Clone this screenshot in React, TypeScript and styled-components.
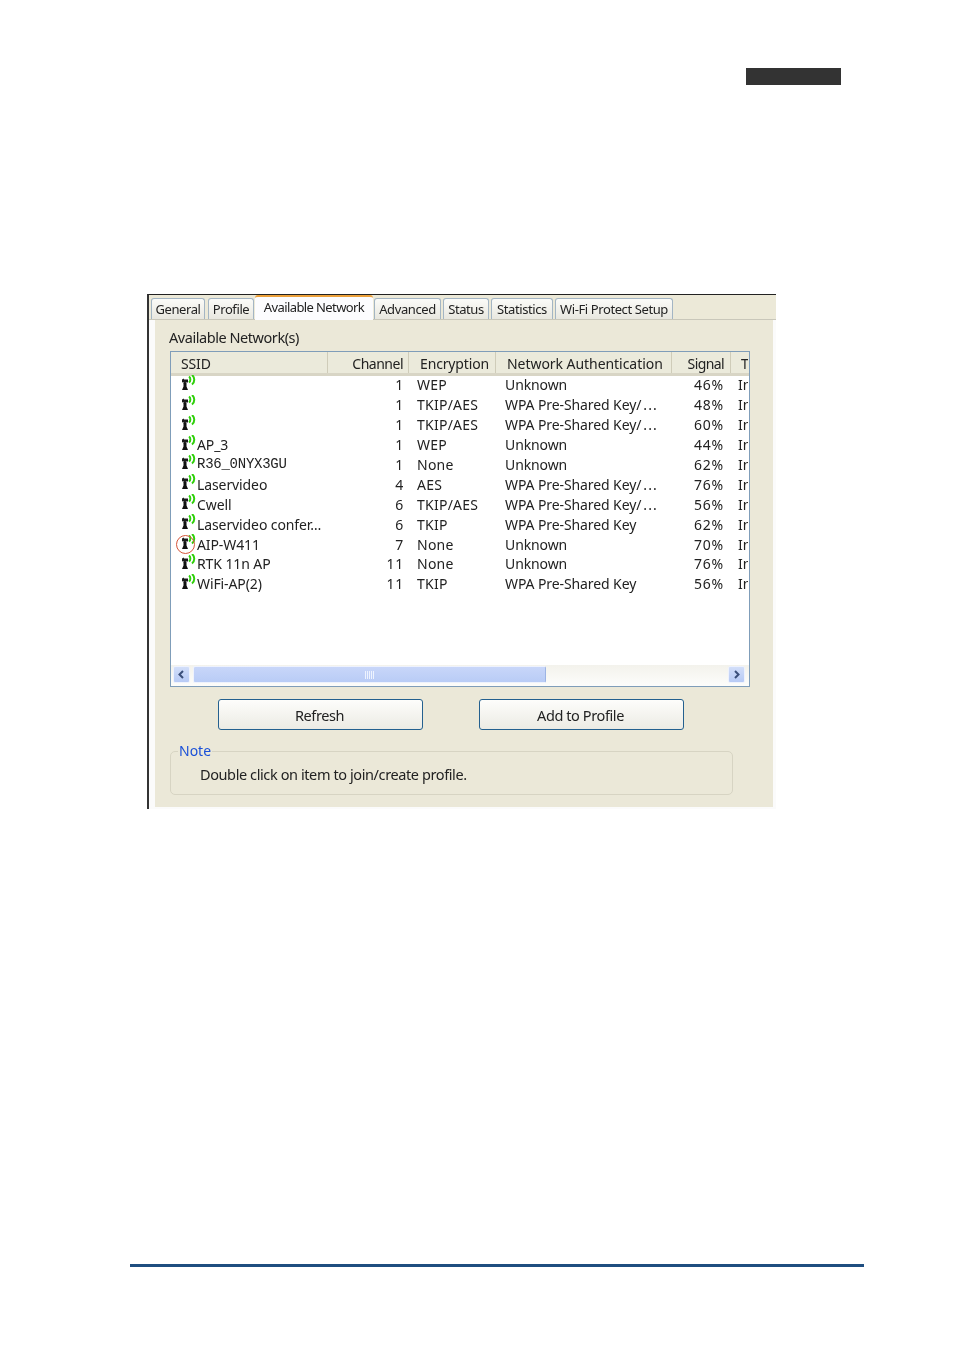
import React from "react";
import styled, { createGlobalStyle } from "styled-components";

const Global = createGlobalStyle`
  html, body { margin: 0; padding: 0; background: #fff; }
  * { box-sizing: border-box; }
`;

const Page = styled.div`
  width: 955px;
  height: 1350px;
  display: flex;
  flex-direction: column;
  background: #fff;
  overflow: hidden;
  font-family: "Noto Sans", "Liberation Sans", sans-serif;
  color: #222;
  font-size: 14px;
`;
const HeaderBar = styled.div`
  width: 95px;
  height: 17px;
  margin: 68px 0 0 746px;
  background: #333333;
`;
const Dialog = styled.div`
  width: 629px;
  height: 515px;
  margin: 209px 0 0 147px;
  border-top: 1px solid #222;
  border-left: 2px solid #333;
  display: flex;
  flex-direction: column;
  background: #fbfbfb;
  filter: blur(0.45px);
`;
const TabStrip = styled.div`
  height: 25px;
  flex: none;
  display: flex;
  align-items: flex-end;
  padding-left: 2px;
  background: #ece9d8;
  border-bottom: 1px solid #c9c7ba;
`;
const Tab = styled.div<{ $w: number; $ml: number; $active?: boolean }>`
  width: ${(p) => p.$w}px;
  margin-left: ${(p) => p.$ml}px;
  height: ${(p) => (p.$active ? 25 : 21)}px;
  margin-bottom: ${(p) => (p.$active ? -1 : 0)}px;
  display: flex;
  align-items: center;
  justify-content: center;
  font-size: 13px;
  letter-spacing: ${(p) => (p.$active ? -0.6 : -0.4)}px;
  white-space: nowrap;
  border-radius: 3px 3px 0 0;
  border: 1px solid #a3b5c4;
  border-bottom: 0;
  background: ${(p) => (p.$active ? "#fcfcfe" : "linear-gradient(#fbfbf8, #e8e7df)")};
  ${(p) => p.$active && "border: 0; border-top: 2px solid #eda13a; position: relative; padding-bottom: 4px;"}
`;
const Panel = styled.div`
  flex: 1;
  margin: 0 3px 2px 6px;
  background: #ebe8d8;
  padding: 8px 0 0 14px;
  display: flex;
  flex-direction: column;
`;
const SectionTitle = styled.div`
  height: 23px;
  line-height: 18px;
  font-size: 14.5px;
  letter-spacing: -0.45px;
`;
const ListBox = styled.div`
  width: 580px;
  height: 336px;
  margin: 0 0 0 1px;
  border: 1px solid #7f9db9;
  background: #fff;
  display: flex;
  flex-direction: column;
`;
const HeaderRow = styled.div`
  height: 24px;
  flex: none;
  display: grid;
  grid-template-columns: 157px 81px 87px 176px 59px 17px;
  background: #ebeadb;
  border-bottom: 3px solid #d8d5c5;
  font-size: 14px;
  overflow: hidden;
`;
const HeadCell = styled.div<{ $right?: boolean; $pad: number; $ls: number }>`
  line-height: 24px;
  white-space: nowrap;
  overflow: hidden;
  letter-spacing: ${(p) => p.$ls}px;
  text-align: ${(p) => (p.$right ? "right" : "left")};
  padding: ${(p) => (p.$right ? `0 ${p.$pad}px 0 0` : `0 0 0 ${p.$pad}px`)};
  border-right: 1px solid #cfccb9;
  &:last-child { border-right: 0; }
`;
const Rows = styled.div`
  flex: 1;
  display: flex;
  flex-direction: column;
  margin-top: -0.6px;
`;
const Row = styled.div`
  height: 19.9px;
  flex: none;
  display: grid;
  grid-template-columns: 157px 81px 87px 176px 59px 17px;
  align-items: center;
  padding-bottom: 3px;
  font-size: 14px;
  letter-spacing: -0.1px;
  white-space: nowrap;
`;
const SsidCell = styled.div`
  display: flex;
  align-items: center;
  padding-left: 10px;
  position: relative;
  height: 100%;
`;
const SsidText = styled.span<{ $mono?: boolean }>`
  margin-left: 1px;
  ${(p) => p.$mono && `font-family: "Liberation Mono", monospace; font-size: 14px; letter-spacing: -0.25px;`}
`;
const Ring = styled.span`
  position: absolute;
  left: 5px;
  top: 0px;
  width: 19px;
  height: 19px;
  border: 1px solid #d6553a;
  border-radius: 50%;
`;
const NumCell = styled.div<{ $pad: number }>`
  text-align: right;
  letter-spacing: 0.8px;
  padding-right: ${(p) => p.$pad}px;
`;
const TextCell = styled.div<{ $pad: number; $ls?: number }>`
  padding-left: ${(p) => p.$pad}px;
  letter-spacing: ${(p) => p.$ls ?? -0.1}px;
  overflow: hidden;
`;
const Dots = styled.span`
  letter-spacing: 1.1px;
  margin-left: 2px;
`;
const ScrollBar = styled.div`
  height: 21px;
  flex: none;
  display: flex;
  align-items: center;
  padding: 0 3px 2px 2px;
  background: linear-gradient(#f3f2ec, #fdfdfb);
`;
const ScrollButton = styled.div`
  width: 17px;
  height: 17px;
  flex: none;
  border-radius: 2px;
  border: 1px solid #eef2fd;
  background: linear-gradient(#d2def9, #b7caf5);
  display: flex;
  align-items: center;
  justify-content: center;
`;
const Thumb = styled.div`
  width: 353px;
  height: 17px;
  margin: 0 182px 0 3px;
  border-radius: 2px;
  border: 1px solid #eef2fd;
  border-right-color: #9db4e4;
  background: linear-gradient(#c8d6f9, #b9ccf6);
  display: flex;
  align-items: center;
  justify-content: center;
`;
const Buttons = styled.div`
  display: flex;
  gap: 56px;
  margin: 12px 0 0 49px;
`;
const Button = styled.div`
  width: 205px;
  height: 31px;
  display: flex;
  align-items: center;
  justify-content: center;
  padding-right: 2px;
  border: 1.5px solid #24608f;
  border-radius: 3px;
  background: linear-gradient(#fdfdfb, #ecebe4);
  font-size: 14.5px;
  letter-spacing: -0.4px;
`;
const Note = styled.fieldset`
  width: 563px;
  height: 52px;
  margin: 13px 0 0 1px;
  padding: 0 0 0 29px;
  border: 1.5px solid #d7d4c3;
  border-radius: 5px;
`;
const Legend = styled.legend`
  padding: 0 1px;
  margin-left: -22px;
  color: #1a50d8;
  font-size: 14px;
  line-height: 16px;
`;
const NoteText = styled.div`
  font-size: 14.5px;
  letter-spacing: -0.4px;
  line-height: 18px;
  margin-top: 6px;
`;
const FooterRule = styled.div`
  width: 734px;
  height: 3px;
  margin: 455px 0 0 130px;
  background: #1f4e80;
`;
const SignalSvg = styled.svg`
  flex: none;
  margin-top: -4px;
`;

const Signal = () => (
  <SignalSvg width="15" height="16" viewBox="0 0 15 16">
    <path d="M1 4.500l2-1v1h4v3H5l-.5 1h-2V7l-1.500.5z" fill="#1c1c1c" />
    <path d="M2.500 8h3v3.500L7 15H1l1.500-3.500z" fill="#111" />
    <path d="M8 1.500c1.800 1.300 1.800 4.700 0 6M11 0c3 2.400 3 7.200 0 9.500" stroke="#2fd00a" strokeWidth="2" fill="none" />
  </SignalSvg>
);

const Chevron = ({ dir }: { dir: "l" | "r" }) => (
  <svg width="9" height="9" viewBox="0 0 9 9">
    <path d={dir === "l" ? "M6 1 2.500 4.500 6 8" : "M3 1l3.500 3.500L3 8"} stroke="#3b4f7a" strokeWidth="2" fill="none" />
  </svg>
);

const Grip = () => (
  <svg width="9" height="8" viewBox="0 0 9 8">
    <path d="M.5 0v8M2.500 0v8M4.500 0v8M6.500 0v8M8.500 0v8" stroke="#eef3fe" strokeWidth="1" />
  </svg>
);

type Net = [string, string, string, string, string, boolean?];
const nets: Net[] = [
  ["", "1", "WEP", "Unknown", "46%"],
  ["", "1", "TKIP/AES", "WPA Pre-Shared Key/...", "48%"],
  ["", "1", "TKIP/AES", "WPA Pre-Shared Key/...", "60%"],
  ["AP_3", "1", "WEP", "Unknown", "44%"],
  ["R36_0NYX3GU", "1", "None", "Unknown", "62%", true],
  ["Laservideo", "4", "AES", "WPA Pre-Shared Key/...", "76%"],
  ["Cwell", "6", "TKIP/AES", "WPA Pre-Shared Key/...", "56%"],
  ["Laservideo confer…", "6", "TKIP", "WPA Pre-Shared Key", "62%"],
  ["AIP-W411", "7", "None", "Unknown", "70%"],
  ["RTK 11n AP", "11", "None", "Unknown", "76%"],
  ["WiFi-AP(2)", "11", "TKIP", "WPA Pre-Shared Key", "56%"],
];

const tabs: [string, number, number, boolean?][] = [
  ["General", 54, 0],
  ["Profile", 46, 3],
  ["Available Network", 118, 1, true],
  ["Advanced", 67, 1],
  ["Status", 46, 2],
  ["Statistics", 62, 2],
  ["Wi-Fi Protect Setup", 118, 2],
];

const Auth = ({ value }: { value: string }) =>
  value.endsWith("...") ? (
    <>
      {value.slice(0, -3)}
      <Dots>...</Dots>
    </>
  ) : (
    <>{value}</>
  );

export default function App() {
  return (
    <Page>
      <Global />
      <HeaderBar />
      <Dialog>
        <TabStrip>
          {tabs.map(([t, w, ml, active]) => (
            <Tab key={t} $w={w} $ml={ml} $active={active}>{t}</Tab>
          ))}
        </TabStrip>
        <Panel>
          <SectionTitle>Available Network(s)</SectionTitle>
          <ListBox>
            <HeaderRow>
              <HeadCell $pad={10} $ls={-0.15}>SSID</HeadCell>
              <HeadCell $right $pad={5} $ls={-0.5}>Channel</HeadCell>
              <HeadCell $pad={11} $ls={-0.15}>Encryption</HeadCell>
              <HeadCell $pad={11} $ls={-0.05}>Network Authentication</HeadCell>
              <HeadCell $right $pad={6} $ls={-0.6}>Signal</HeadCell>
              <HeadCell $pad={10} $ls={-0.15}>Type</HeadCell>
            </HeaderRow>
            <Rows>
              {nets.map(([ssid, ch, enc, auth, sig, mono]) => (
                <Row key={ssid + sig + auth}>
                  <SsidCell>
                    <Signal />
                    <SsidText $mono={mono}>{ssid}</SsidText>
                    {ssid === "AIP-W411" && <Ring />}
                  </SsidCell>
                  <NumCell $pad={5}>{ch}</NumCell>
                  <TextCell $pad={8} $ls={0.25}>{enc}</TextCell>
                  <TextCell $pad={9}><Auth value={auth} /></TextCell>
                  <NumCell $pad={7}>{sig}</NumCell>
                  <TextCell $pad={7}>Infrastructure</TextCell>
                </Row>
              ))}
            </Rows>
            <ScrollBar>
              <ScrollButton><Chevron dir="l" /></ScrollButton>
              <Thumb><Grip /></Thumb>
              <ScrollButton><Chevron dir="r" /></ScrollButton>
            </ScrollBar>
          </ListBox>
          <Buttons>
            <Button>Refresh</Button>
            <Button>Add to Profile</Button>
          </Buttons>
          <Note>
            <Legend>Note</Legend>
            <NoteText>Double click on item to join/create profile.</NoteText>
          </Note>
        </Panel>
      </Dialog>
      <FooterRule />
    </Page>
  );
}
